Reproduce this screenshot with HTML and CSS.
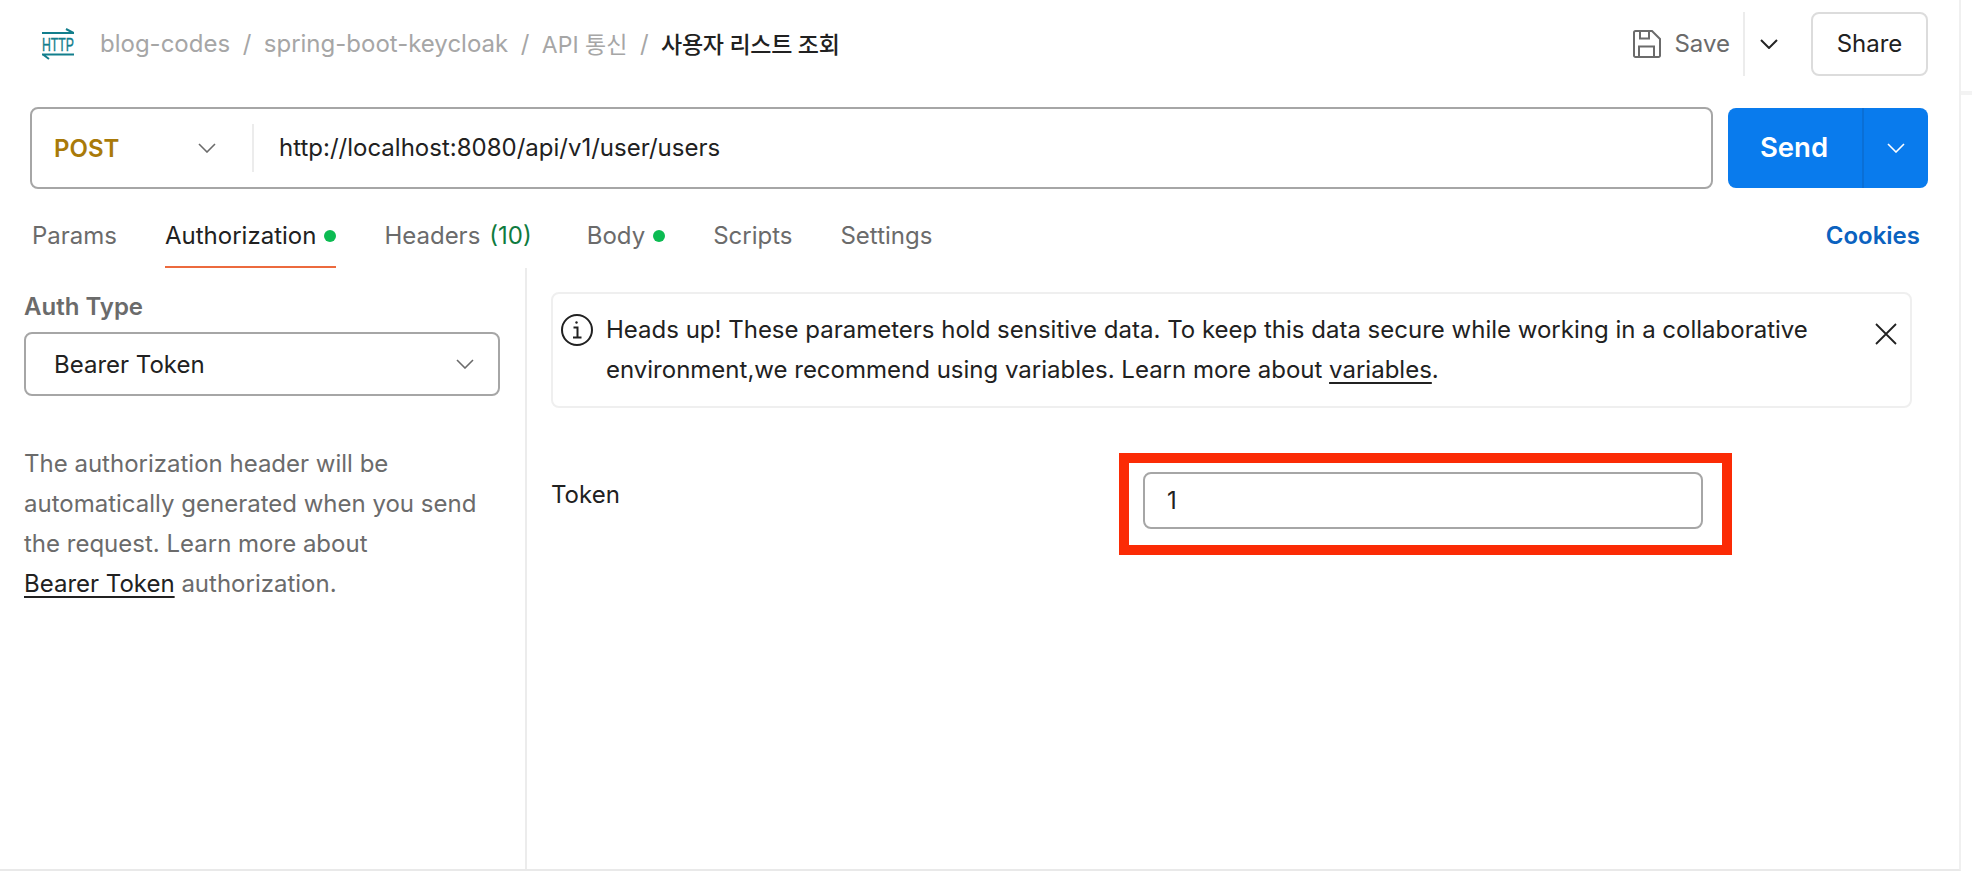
FILE: index.html
```html
<!DOCTYPE html>
<html lang="ko">
<head>
<meta charset="utf-8">
<title>사용자 리스트 조회</title>
<link rel="stylesheet" href="styles.css">
</head>
<body>
<div class="edge"></div>
<main class="app">
  <header class="topbar">
    <div class="crumbs">
      <svg class="http-icon" width="34" height="34" viewBox="0 0 34 34" fill="none" stroke="#127e8c" stroke-width="2">
        <path d="M0 5H32M24 1L31.500 5"/>
        <text x="16" y="23" text-anchor="middle" class="http-text" textLength="32" lengthAdjust="spacingAndGlyphs">HTTP</text>
        <path d="M0 26.500H32M1 26.500L7 31"/>
      </svg>
      <span class="crumb">blog-codes</span><span class="sep">/</span>
      <span class="crumb">spring-boot-keycloak</span><span class="sep">/</span>
      <span class="crumb ko">API 통신</span><span class="sep">/</span>
      <span class="crumb current">사용자 리스트 조회</span>
    </div>
    <div class="actions">
      <svg class="save-icon" width="30" height="30" viewBox="0 0 30 30" fill="none" stroke="#6b6b6b" stroke-width="2">
        <path d="M2 3.500A1.500 1.500 0 0 1 3.500 2H20L28 10V26.500A1.500 1.500 0 0 1 26.500 28H3.500A1.500 1.500 0 0 1 2 26.500Z"/>
        <path d="M8 2V9.500H17V2M7 28V17.500H22V28"/>
      </svg>
      <span class="save-label">Save</span>
      <span class="save-split"></span>
      <svg class="save-more" width="18" height="10" viewBox="0 0 18 10" fill="none" stroke="#242424" stroke-width="2"><path d="M1 1L9 9L17 1"/></svg>
      <button class="share">Share</button>
    </div>
  </header>

  <section class="request">
    <div class="urlbar">
      <span class="method">POST</span>
      <svg class="chev" width="18" height="10" viewBox="0 0 18 10" fill="none" stroke="#6b6b6b" stroke-width="1.600"><path d="M1 1L9 9L17 1"/></svg>
      <span class="url-split"></span>
      <span class="url">http://localhost:8080/api/v1/user/users</span>
    </div>
    <div class="send">
      <span class="send-label">Send</span>
      <span class="send-more">
        <svg width="18" height="10" viewBox="0 0 18 10" fill="none" stroke="#fff" stroke-width="1.600"><path d="M1 1L9 9L17 1"/></svg>
      </span>
    </div>
  </section>

  <nav class="tabs">
    <span class="tab">Params</span>
    <span class="tab active">Authorization<i class="dot"></i></span>
    <span class="tab">Headers<em class="count">(10)</em></span>
    <span class="tab body-tab">Body<i class="dot"></i></span>
    <span class="tab">Scripts</span>
    <span class="tab">Settings</span>
    <span class="cookies">Cookies</span>
  </nav>

  <section class="panel">
    <aside class="side">
      <h2 class="side-title">Auth Type</h2>
      <div class="select">
        <span>Bearer Token</span>
        <svg width="18" height="10" viewBox="0 0 18 10" fill="none" stroke="#6b6b6b" stroke-width="1.600"><path d="M1 1L9 9L17 1"/></svg>
      </div>
      <p class="help">The authorization header will be automatically generated when you send the request. Learn more about <a class="link">Bearer Token</a> authorization.</p>
    </aside>
    <div class="content">
      <div class="notice">
        <svg class="info" width="32" height="32" viewBox="0 0 32 32" fill="none" stroke="#212121" stroke-width="2">
          <circle cx="16" cy="16" r="15"/>
          <path d="M12.500 13.500H16.500V23M12 23.500H20.500"/>
          <circle cx="15.500" cy="8.500" r="1.200" fill="#212121" stroke="none"/>
        </svg>
        <p class="notice-text">Heads up! These parameters hold sensitive data. To keep this data secure while working in a collaborative environment,we recommend using variables. Learn more about <a class="link">variables</a>.</p>
        <svg class="close" width="22" height="22" viewBox="0 0 22 22" fill="none" stroke="#212121" stroke-width="1.800"><path d="M1 1L21 21M21 1L1 21"/></svg>
      </div>
      <div class="token-row">
        <label class="token-label">Token</label>
        <div class="token-field">
          <div class="token-input">1</div>
          <div class="mark"></div>
        </div>
      </div>
    </div>
  </section>
</main>
</body>
</html>
```

FILE: styles.css
```css
* { box-sizing: border-box; }
html, body { margin: 0; height: 100%; }
body {
  background: #fff;
  color: #212121;
  font-family: Inter, "Noto Sans CJK KR", "Liberation Sans", sans-serif;
  font-size: 24px;
  overflow: hidden;
  position: relative;
}
.app {
  width: 1961px;
  height: 871px;
  border-right: 2px solid #f0f0f0;
  border-bottom: 2px solid #e9e9e9;
  display: flex;
  flex-direction: column;
}
.edge {
  position: absolute;
  left: 1961px;
  top: 91px;
  width: 11px;
  height: 4px;
  background: #f3f3f3;
}
.topbar {
  height: 88px;
  flex: none;
  display: flex;
  align-items: center;
  justify-content: space-between;
  padding: 0 31px 0 42px;
}
.crumbs { display: flex; align-items: center; padding-bottom: 2px; }
.http-icon { margin: 4px 24px 0 0; overflow: visible; }
.http-text {
  font-family: "Liberation Sans", sans-serif;
  font-size: 19px;
  fill: #127e8c;
  stroke: #127e8c;
  stroke-width: 0.4px;
}
.crumb { color: #a6a6a6; }
.crumb.ko { font-size: 23px; }
.crumb.current { color: #212121; font-weight: 500; font-size: 23px; letter-spacing: -0.3px; }
.sep { color: #a6a6a6; margin: 0 12.500px; }
.actions { display: flex; align-items: center; }
.save-icon { margin-right: 12px; }
.save-label { color: #6b6b6b; padding-bottom: 2px; }
.save-split { width: 2px; height: 64px; background: #ececec; margin: 0 15px 0 13px; }
.save-more { margin-right: 33px; }
.share {
  width: 117px;
  height: 64px;
  border: 2px solid #dcdcdc;
  border-radius: 8px;
  background: #fff;
  color: #212121;
  font: inherit;
  padding: 0 0 2px;
}
.request {
  margin-top: 19px;
  height: 82px;
  flex: none;
  display: flex;
  align-items: center;
  padding: 0 31px 0 30px;
  gap: 15px;
}
.urlbar {
  flex: 1;
  height: 82px;
  border: 2px solid #a6a6a6;
  border-radius: 8px;
  display: flex;
  align-items: center;
  padding-left: 22px;
}
.method { color: #a97a09; font-weight: 600; width: 144px; }
.chev { flex: none; }
.url-split { width: 2px; height: 48px; background: #ececec; margin: 0 25px 0 36px; }
.url { color: #212121; padding-bottom: 2px; }
.send {
  width: 200px;
  height: 80px;
  background: #097bed;
  border-radius: 8px;
  display: flex;
  color: #fff;
  font-weight: 600;
  font-size: 27.500px;
}
.send-label { width: 134px; display: flex; align-items: center; justify-content: center; padding: 0 2px 2px 0; }
.send-more {
  flex: 1;
  border-left: 2px solid #0a6fd6;
  display: flex;
  align-items: center;
  justify-content: center;
}
.tabs {
  height: 79px;
  flex: none;
  display: flex;
  padding: 0 31px 0 32px;
  gap: 48px;
}
.tab {
  display: flex;
  align-items: center;
  color: #6b6b6b;
  height: 79px;
  padding-top: 16px;
  border-bottom: 2px solid transparent;
}
.tab.active { color: #212121; border-bottom-color: #ec6a3e; }
.body-tab { margin-left: 7px; }
.dot {
  width: 12px;
  height: 12px;
  border-radius: 50%;
  background: #0cbb52;
  margin-left: 8px;
}
.count { color: #0f7b3f; font-style: normal; margin-left: 9px; }
.cookies {
  margin-left: auto;
  margin-right: 8px;
  color: #0b62bf;
  font-weight: 600;
  align-self: center;
  padding-top: 13px;
}
.panel { flex: 1; display: flex; min-height: 0; }
.side {
  width: 527px;
  flex: none;
  border-right: 2px solid #ececec;
  padding: 24px 26px 0 24px;
}
.side-title {
  margin: 0;
  font-size: 24px;
  font-weight: 600;
  color: #6b6b6b;
  line-height: 30px;
}
.select {
  margin-top: 10px;
  height: 64px;
  width: 476px;
  border: 2px solid #a6a6a6;
  border-radius: 8px;
  display: flex;
  align-items: center;
  justify-content: space-between;
  padding: 0 24px 0 28px;
}
.help {
  margin: 48px 0 0;
  color: #6b6b6b;
  line-height: 40px;
  width: 476px;
}
.link { color: #212121; text-decoration: underline; text-underline-offset: 4px; white-space: nowrap; }
.content { flex: 1; padding: 24px 47px 0 24px; min-width: 0; }
.notice {
  height: 116px;
  border: 2px solid #efefef;
  border-radius: 8px;
  display: flex;
  align-items: flex-start;
  padding: 20px 13px 0 8px;
}
.info { flex: none; margin-right: 13px; }
.notice-text { margin: -4px 0 0; flex: 1; line-height: 40px; }
.close { flex: none; margin-top: 9px; }
.token-row { display: flex; margin-top: 64px; }
.token-label { width: 592px; line-height: 46px; }
.token-field { position: relative; width: 560px; }
.token-input {
  height: 57px;
  border: 2px solid #a6a6a6;
  border-radius: 8px;
  display: flex;
  align-items: center;
  padding-left: 22px;
}
.mark {
  position: absolute;
  left: -24px;
  right: -29px;
  top: -19px;
  bottom: -26px;
  border: 10px solid #fb2b05;
  pointer-events: none;
}
```
